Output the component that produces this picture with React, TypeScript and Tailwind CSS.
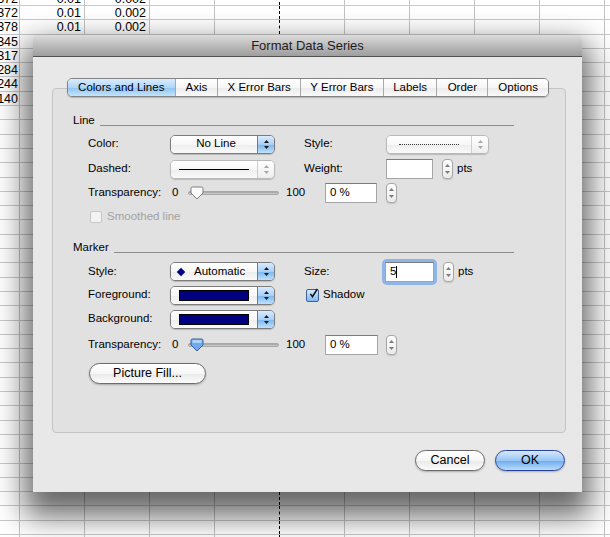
import React from 'react';

const sheetRows: string[][] = [
  ['0.0372', '0.01', '0.002'],
  ['0.0372', '0.01', '0.002'],
  ['0.0378', '0.01', '0.002'],
  ['0.0345', '', ''],
  ['0.0317', '', ''],
  ['0.0284', '', ''],
  ['0.0244', '', ''],
  ['0.0140', '', ''],
];

const ROW_COUNT = 39;
const COL_COUNT = 9;

function Sheet() {
  return (
    <div className="mt-[-8.3px] text-[12.5px] text-black">
      {Array.from({ length: ROW_COUNT }).map((_, r) => (
        <div key={r} className="flex h-[14.3px] border-b border-[#c9c9c9]">
          <div className="w-[20px] shrink-0 flex justify-end overflow-hidden border-r border-[#c3c3c3] leading-[14px] pr-[1px]">
            <span className="whitespace-nowrap">{sheetRows[r]?.[0] ?? ''}</span>
          </div>
          {Array.from({ length: COL_COUNT }).map((_, c) => (
            <div
              key={c}
              className={`w-[65px] shrink-0 flex justify-end leading-[14px] pr-[3px] ${
                c === 3 ? 'border-r border-dashed border-black' : 'border-r border-[#c3c3c3]'
              }`}
            >
              {sheetRows[r]?.[c + 1] ?? ''}
            </div>
          ))}
        </div>
      ))}
    </div>
  );
}

function Arrows({ disabled }: { disabled?: boolean }) {
  const fill = disabled ? '#a8a8a8' : '#1a1a1a';
  return (
    <svg width="7" height="11" viewBox="0 0 7 11">
      <path d="M3.5 1 L6 4 L1 4 Z" fill={fill} />
      <path d="M3.5 10 L6 7 L1 7 Z" fill={fill} />
    </svg>
  );
}

function Popup({ className, children, disabled }: { className: string; children: React.ReactNode; disabled?: boolean }) {
  return (
    <div
      className={`flex h-[19px] rounded-[5px] border overflow-hidden shadow-[0_1px_1px_rgba(0,0,0,0.18)] ${
        disabled ? 'border-[#b9b9b9]' : 'border-[#7b7b7b]'
      } ${className}`}
    >
      <div className="flex-1 flex items-center bg-[linear-gradient(to_bottom,#ffffff_0%,#f7f7f7_50%,#ededed_51%,#fafafa_100%)]">
        {children}
      </div>
      <div
        className={`w-[17px] border-l flex items-center justify-center ${
          disabled
            ? 'border-[#cfcfcf] bg-[linear-gradient(to_bottom,#ffffff,#eeeeee)]'
            : 'border-[#5b7fb3] bg-[linear-gradient(to_bottom,#d9ecfd_0%,#a9d0f6_50%,#79b5ef_51%,#bfe1fc_100%)]'
        }`}
      >
        <Arrows disabled={disabled} />
      </div>
    </div>
  );
}

function Stepper() {
  return (
    <div className="w-[11px] h-[20px] rounded-[4px] border border-[#a6a6a6] bg-[linear-gradient(to_bottom,#ffffff,#ebebeb)] flex flex-col items-center justify-center gap-[4px] shadow-[0_1px_1px_rgba(0,0,0,0.12)]">
      <svg width="5" height="3" viewBox="0 0 5 3">
        <path d="M2.5 0 L5 3 L0 3 Z" fill="#7a7a7a" />
      </svg>
      <svg width="5" height="3" viewBox="0 0 5 3">
        <path d="M2.5 3 L5 0 L0 0 Z" fill="#7a7a7a" />
      </svg>
    </div>
  );
}

function Field({ className, children }: { className: string; children?: React.ReactNode }) {
  return (
    <div
      className={`h-[20px] bg-white border border-[#a5a5a5] border-t-[#7c7c7c] flex items-center px-[4px] text-[11.5px] ${className}`}
    >
      {children}
    </div>
  );
}

function Slider({ blue }: { blue?: boolean }) {
  return (
    <div className="relative w-[91px] h-[16px] flex items-center">
      <div className="w-full h-[4px] rounded-full bg-[linear-gradient(to_bottom,#9c9c9c,#d6d6d6)] border border-[#a8a8a8]" />
      <svg className="absolute left-[2px] top-[1px]" width="14" height="14" viewBox="0 0 14 14">
        <path
          d="M2.5 1 H11.5 Q13 1 13 2.5 V7 L7 13 L1 7 V2.5 Q1 1 2.5 1 Z"
          fill={blue ? '#6eaaf0' : '#fafafa'}
          stroke={blue ? '#3e5f9c' : '#7d7d7d'}
          strokeWidth="1"
        />
        {blue && <path d="M2.5 2 H11.5 V5 H2.5 Z" fill="#bfdcfa" opacity="0.8" />}
      </svg>
    </div>
  );
}

function SectionHeader({ title }: { title: string }) {
  return (
    <div className="flex items-end h-[24px] pl-[20px] pr-[51px] text-[11.5px] text-black">
      <span className="leading-[16px] pb-[3px]">{title}</span>
      <div className="flex-1 h-px bg-[#8d8d8d] ml-[5px] mb-[5px]" />
    </div>
  );
}

const tabs = ['Colors and Lines', 'Axis', 'X Error Bars', 'Y Error Bars', 'Labels', 'Order', 'Options'];
const tabWidths = ['w-[107px]', 'w-[43px]', 'w-[83px]', 'w-[83px]', 'w-[54px]', 'w-[51px]', 'w-[61px]'];

function Tabs() {
  return (
    <div className="relative z-10 ml-[34px] flex h-[19px] w-[482px] rounded-[5px] border border-[#838383] overflow-hidden shadow-[0_1px_1px_rgba(0,0,0,0.2)] text-[11.5px] text-black">
      {tabs.map((t, i) => (
        <div
          key={t}
          className={`${tabWidths[i]} flex items-center justify-center ${i > 0 ? 'border-l border-[#a9a9a9]' : ''} ${
            i === 0
              ? 'bg-[linear-gradient(to_bottom,#d8ecfd_0%,#b1d6f8_50%,#8ec3f3_51%,#c4e3fc_100%)]'
              : 'bg-[linear-gradient(to_bottom,#ffffff_0%,#f6f6f6_50%,#ebebeb_51%,#f9f9f9_100%)]'
          }`}
        >
          {t}
        </div>
      ))}
    </div>
  );
}

function Label({ className, children, muted }: { className: string; children: React.ReactNode; muted?: boolean }) {
  return <div className={`${className} shrink-0 ${muted ? 'text-[#9d9d9d]' : ''}`}>{children}</div>;
}

function AquaButton({ className, children, primary }: { className: string; children: React.ReactNode; primary?: boolean }) {
  return (
    <div
      className={`h-[21px] rounded-full border flex items-center justify-center text-[12.5px] text-black shadow-[0_1px_2px_rgba(0,0,0,0.25)] ${
        primary
          ? 'border-[#27449a] bg-[linear-gradient(to_bottom,#d5e8fc_0%,#9ac6f3_50%,#6eaaee_51%,#b9dcfb_100%)]'
          : 'border-[#6b6b6b] bg-[linear-gradient(to_bottom,#ffffff_0%,#f6f6f6_50%,#e9e9e9_51%,#fbfbfb_100%)]'
      } ${className}`}
    >
      {children}
    </div>
  );
}

function Dialog() {
  return (
    <div className="absolute left-[33px] top-[35px] w-[549px] h-[457px] bg-[#e8e8e8] rounded-t-[5px] shadow-[0_16px_30px_8px_rgba(0,0,0,0.6)] flex flex-col">
      <div className="h-[22px] shrink-0 rounded-t-[5px] border-b border-[#515151] bg-[linear-gradient(to_bottom,#dcdcdc,#b5b5b5_60%,#9e9e9e)] flex items-center justify-center text-[13px] text-[#1c1c1c]">
        Format Data Series
      </div>

      <div className="pt-[21px] flex flex-col">
        <Tabs />
        <div className="ml-[19px] mt-[-9px] w-[514px] h-[345px] rounded-[4px] border border-[#c4c4c4] bg-[#e1e1e1] pt-[18px] text-[11.5px] text-black">
          <SectionHeader title="Line" />

          <div className="mt-[1px] h-[24px] flex items-center pl-[35px]">
            <Label className="w-[82px]">Color:</Label>
            <Popup className="w-[105px]">
              <span className="flex-1 text-center pl-[4px]">No Line</span>
            </Popup>
            <div className="w-[29px]" />
            <Label className="w-[82px]">Style:</Label>
            <Popup className="w-[103px]" disabled>
              <div className="flex-1 mx-[12px] border-t border-dotted border-[#333]" />
            </Popup>
          </div>

          <div className="mt-[1px] h-[24px] flex items-center pl-[35px]">
            <Label className="w-[82px]">Dashed:</Label>
            <Popup className="w-[105px]" disabled>
              <div className="flex-1 mx-[8px] h-px bg-black" />
            </Popup>
            <div className="w-[29px]" />
            <Label className="w-[82px]">Weight:</Label>
            <Field className="w-[47px]" />
            <div className="ml-[9px]">
              <Stepper />
            </div>
            <span className="ml-[4px]">pts</span>
          </div>

          <div className="h-[24px] flex items-center pl-[35px]">
            <Label className="w-[84px]">Transparency:</Label>
            <Label className="w-[16px]">0</Label>
            <Slider />
            <Label className="w-[46px] pl-[7px]">100</Label>
            <Field className="w-[52px]">0 %</Field>
            <div className="ml-[9px]">
              <Stepper />
            </div>
          </div>

          <div className="h-[24px] flex items-center pl-[37px]">
            <div className="w-[12px] h-[12px] rounded-[2px] border border-[#c6c6c6] bg-[#f3f3f3]" />
            <span className="ml-[5px] text-[#a2a2a2]">Smoothed line</span>
          </div>

          <div className="mt-[5px]">
            <SectionHeader title="Marker" />
          </div>

          <div className="mt-[2px] h-[23px] flex items-center pl-[35px]">
            <Label className="w-[82px]">Style:</Label>
            <Popup className="w-[105px]">
              <div className="flex items-center pl-[7px]">
                <span className="w-[6px] h-[6px] bg-[#000080] rotate-45" />
                <span className="ml-[10px]">Automatic</span>
              </div>
            </Popup>
            <div className="w-[29px]" />
            <Label className="w-[81px]">Size:</Label>
            <div className="rounded-[2px] shadow-[0_0_0_3px_#8eb5e6]">
              <Field className="w-[49px]">
                5<span className="w-px h-[12px] bg-black" />
              </Field>
            </div>
            <div className="ml-[9px]">
              <Stepper />
            </div>
            <span className="ml-[4px]">pts</span>
          </div>

          <div className="h-[24px] flex items-center pl-[35px]">
            <Label className="w-[82px]">Foreground:</Label>
            <Popup className="w-[105px]">
              <div className="flex-1 mx-[8px] h-[11px] bg-[#000080] border border-black" />
            </Popup>
            <div className="w-[31px]" />
            <div className="w-[13px] h-[13px] rounded-[2px] border border-[#3f5f98] bg-[linear-gradient(to_bottom,#d6eafc,#7fb7ef)] flex items-center justify-center">
              <svg width="13" height="13" viewBox="0 0 13 13" className="-mt-[3px] ml-[2px]">
                <path d="M2 7 L5 11 L12 0" fill="none" stroke="#111" strokeWidth="2.2" />
              </svg>
            </div>
            <span className="ml-[4px]">Shadow</span>
          </div>

          <div className="h-[24px] flex items-center pl-[35px]">
            <Label className="w-[82px]">Background:</Label>
            <Popup className="w-[105px]">
              <div className="flex-1 mx-[8px] h-[11px] bg-[#000080] border border-black" />
            </Popup>
          </div>

          <div className="mt-[2px] h-[24px] flex items-center pl-[35px]">
            <Label className="w-[84px]">Transparency:</Label>
            <Label className="w-[16px]">0</Label>
            <Slider blue />
            <Label className="w-[46px] pl-[7px]">100</Label>
            <Field className="w-[53px]">0 %</Field>
            <div className="ml-[8px]">
              <Stepper />
            </div>
          </div>

          <div className="mt-[4px] h-[24px] flex items-center pl-[36px]">
            <AquaButton className="w-[117px]">Picture Fill...</AquaButton>
          </div>
        </div>

        <div className="mt-[17px] flex justify-end gap-[10px] pr-[17px]">
          <AquaButton className="w-[70px]">Cancel</AquaButton>
          <AquaButton className="w-[70px]" primary>
            OK
          </AquaButton>
        </div>
      </div>
    </div>
  );
}

export default function App() {
  return (
    <div className="relative w-[610px] h-[537px] overflow-hidden bg-white font-['Liberation_Sans',Arial,sans-serif]">
      <Sheet />
      <Dialog />
    </div>
  );
}
